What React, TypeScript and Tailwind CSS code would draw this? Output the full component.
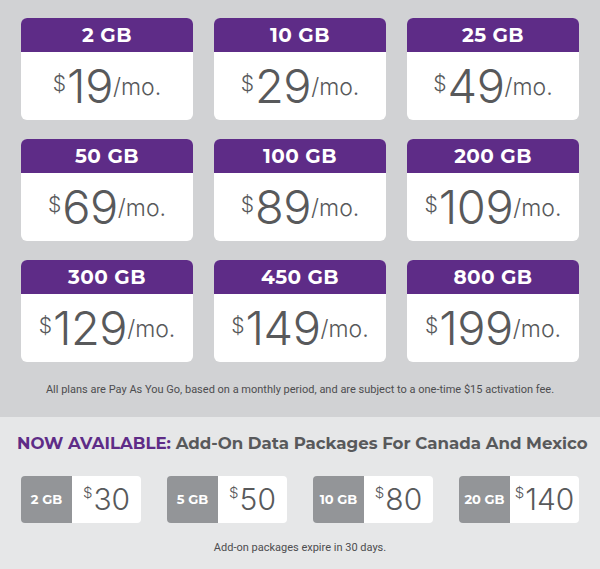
import React from 'react';

const plans = [
    { data: '2 GB', price: '19' },
    { data: '10 GB', price: '29' },
    { data: '25 GB', price: '49' },
    { data: '50 GB', price: '69' },
    { data: '100 GB', price: '89' },
    { data: '200 GB', price: '109' },
    { data: '300 GB', price: '129' },
    { data: '450 GB', price: '149' },
    { data: '800 GB', price: '199' },
];

const addOns = [
    { data: '2 GB', price: '30' },
    { data: '5 GB', price: '50' },
    { data: '10 GB', price: '80' },
    { data: '20 GB', price: '140' },
];

const heading = { fontFamily: 'Montserrat, Inter, "Open Sans", sans-serif' };
const thin = { fontFamily: 'Inter, Lato, sans-serif' };
const narrow = { fontFamily: 'Roboto, "Liberation Sans", sans-serif' };

function PlanCard({ data, price }: { data: string; price: string }) {
    return (
        <div className="h-[102px] rounded-[6px] overflow-hidden bg-white flex flex-col">
            <div
                className="h-[34px] bg-[#5e2c87] text-white text-[20px] font-bold flex items-center justify-center tracking-[0.02em]"
                style={heading}
            >
                {data}
            </div>
            <div className="flex-1 flex items-center justify-center text-[#58595b] pb-[2px]" style={thin}>
                <span className="text-[21px] font-light self-start mt-[16px] mr-[1px]">$</span>
                <span className="text-[47px] font-light leading-none tracking-[-0.01em]">{price}</span>
                <span className="text-[23px] font-light self-end mb-[14px]">/mo.</span>
            </div>
        </div>
    );
}

function AddOn({ data, price }: { data: string; price: string }) {
    return (
        <div className="w-[120px] h-[47px] rounded-[4px] overflow-hidden flex">
            <div
                className="w-[51px] bg-[#939598] text-white text-[13px] font-bold flex items-center justify-center"
                style={heading}
            >
                {data}
            </div>
            <div className="flex-1 bg-white flex items-center justify-center text-[#58595b]" style={thin}>
                <span className="text-[15px] font-light self-start mt-[6px] mr-[1px]">$</span>
                <span className="text-[30px] font-light leading-none">{price}</span>
            </div>
        </div>
    );
}

export default function App() {
    return (
        <div className="w-[600px] h-[569px] flex flex-col">
            <div className="bg-[#d1d2d4] pt-[18px] px-[21px] h-[417px]">
                <div className="grid grid-cols-3 gap-x-[21px] gap-y-[19px]">
                    {plans.map((p) => (
                        <PlanCard key={p.data} data={p.data} price={p.price} />
                    ))}
                </div>
                <p className="mt-[20px] text-center text-[11px] text-[#4d4d4f]" style={narrow}>
                    All plans are Pay As You Go, based on a monthly period, and are subject to a one-time $15 activation fee.
                </p>
            </div>

            <div className="flex-1 bg-[#e6e7e8] px-[17px] pt-[14px]">
                <h2 className="text-center text-[16.6px] font-bold text-[#58595b] whitespace-nowrap" style={heading}>
                    <span className="text-[#5e2c87]">NOW AVAILABLE:</span> Add-On Data Packages For Canada And Mexico
                </h2>
                <div className="mt-[20px] flex justify-between px-[4px]">
                    {addOns.map((a) => (
                        <AddOn key={a.data} data={a.data} price={a.price} />
                    ))}
                </div>
                <p className="mt-[17px] text-center text-[11px] text-[#4d4d4f]" style={narrow}>
                    Add-on packages expire in 30 days.
                </p>
            </div>
        </div>
    );
}
